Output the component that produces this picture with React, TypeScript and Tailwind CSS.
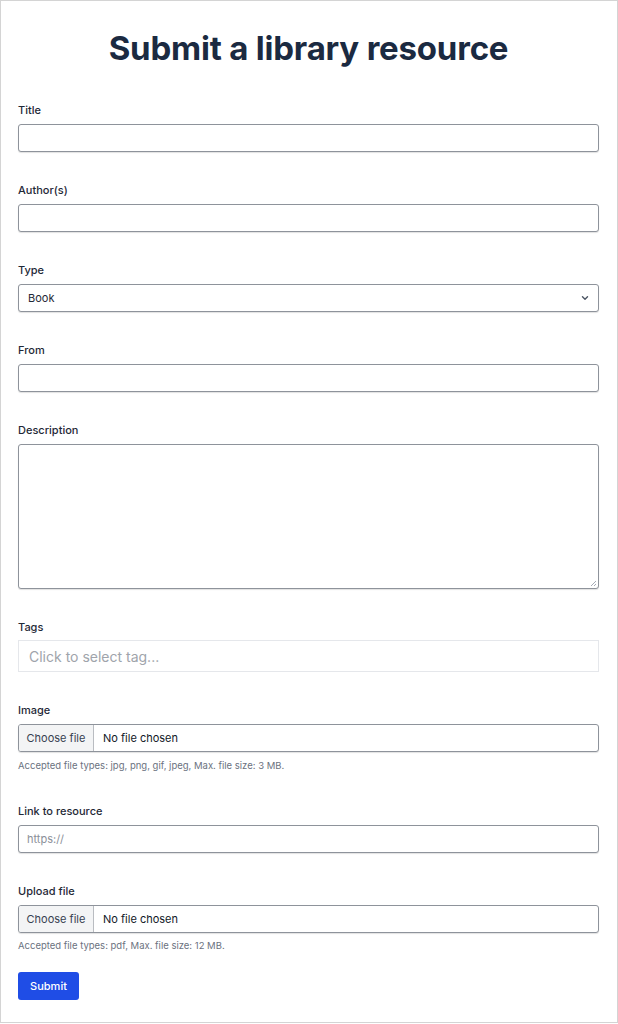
import React from "react";

const font = { fontFamily: 'Inter, "Noto Sans", "Liberation Sans", sans-serif' };

function Label({ children }: { children: React.ReactNode }) {
  return (
    <div className="text-[11px] leading-[16px] font-medium text-[#1f2937] mb-[6px]">{children}</div>
  );
}

const inputCls =
  "w-full h-[28px] border border-[#8e939b] rounded-[3px] bg-white shadow-[0_1px_1px_rgba(0,0,0,0.12)]";

function FileInput() {
  return (
    <div className={inputCls + " flex items-stretch overflow-hidden"}>
      <div className="w-[75px] bg-[#f3f4f5] border-r border-[#b9bcc1] flex items-center justify-center text-[11px] text-[#374151]">
        Choose file
      </div>
      <div className="flex items-center pl-[9px] text-[11px] text-[#111827]">No file chosen</div>
    </div>
  );
}

export default function App() {
  return (
    <div style={font} className="w-[618px] h-[1023px] border border-[#d4d4d4] bg-white">
      <div className="pl-[17px] pr-[18px]">
        <h1 className="mt-[27px] text-center text-[33px] leading-[40px] font-bold text-[#1b2a41] tracking-[-0.2px]">
          Submit a library resource
        </h1>

        <div className="mt-[34px]">
          <Label>Title</Label>
          <div className={inputCls} />
        </div>

        <div className="mt-[30px]">
          <Label>Author(s)</Label>
          <div className={inputCls} />
        </div>

        <div className="mt-[30px]">
          <Label>Type</Label>
          <div className={inputCls + " flex items-center justify-between pl-[9px] pr-[8px]"}>
            <span className="text-[11px] text-[#1f2937]">Book</span>
            <svg width="10" height="10" viewBox="0 0 10 10" fill="none">
              <path d="M2.5 3.8 L5 6.2 L7.5 3.8" stroke="#4b5563" strokeWidth="1.4" strokeLinecap="round" strokeLinejoin="round" />
            </svg>
          </div>
        </div>

        <div className="mt-[30px]">
          <Label>From</Label>
          <div className={inputCls} />
        </div>

        <div className="mt-[30px]">
          <Label>Description</Label>
          <div className="relative w-full h-[145px] border border-[#8e939b] rounded-[3px] bg-white shadow-[0_1px_1px_rgba(0,0,0,0.12)]">
            <svg className="absolute right-[1px] bottom-[1px]" width="8" height="8" viewBox="0 0 8 8">
              <path d="M7 2 L2 7 M7 5 L5 7" stroke="#9ca3af" strokeWidth="0.9" />
            </svg>
          </div>
        </div>

        <div className="mt-[30px]">
          <div className="text-[11px] leading-[16px] font-medium text-[#1f2937] mb-[5px]">Tags</div>
          <div className="w-full h-[32px] border border-[#e5e7eb] bg-white flex items-center pl-[10px] text-[14px] text-[#a0a4ab]">
            Click to select tag...
          </div>
        </div>

        <div className="mt-[30px]">
          <Label>Image</Label>
          <FileInput />
          <div className="mt-[7px] text-[9.5px] leading-[14px] text-[#6b7280]">
            Accepted file types: jpg, png, gif, jpeg, Max. file size: 3 MB.
          </div>
        </div>

        <div className="mt-[30px]">
          <Label>Link to resource</Label>
          <div className={inputCls + " flex items-center pl-[8px] text-[11px] text-[#8b9099]"}>https://</div>
        </div>

        <div className="mt-[30px]">
          <Label>Upload file</Label>
          <FileInput />
          <div className="mt-[6px] text-[9.5px] leading-[14px] text-[#6b7280]">
            Accepted file types: pdf, Max. file size: 12 MB.
          </div>
        </div>

        <button className="mt-[19px] w-[61px] h-[28px] rounded-[3px] bg-[#1f4de6] text-white text-[11px] font-medium flex items-center justify-center">
          Submit
        </button>
      </div>
    </div>
  );
}
